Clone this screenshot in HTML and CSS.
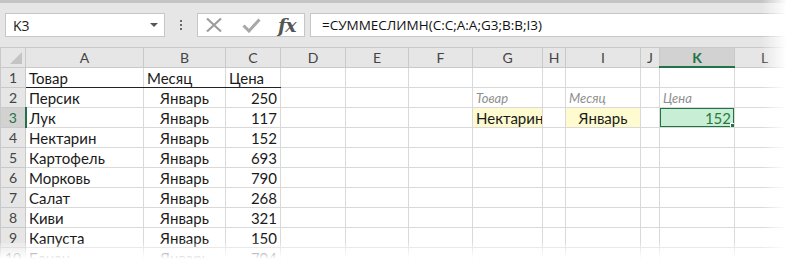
FILE: index.html
```html
<!Doctype html>
<html>
    <head>
        <link rel="stylesheet" href="styles.css">
        <title>
            СУММЕСЛИМН
        </title>
    </head>
    <body>

        <div class="toolbar">
            <div class="name-box">
                <span>K3</span>
                <span class="name-arrow"></span>
            </div>
            <div class="grip">
                <span></span><span></span><span></span>
            </div>
            <div class="formula-buttons">
                <svg class="icon" width="18" height="16" viewBox="0 0 18 16">
                    <path d="M2 1.5 L16 14.5 M16 1.5 L2 14.5" stroke="#9d9d9d" stroke-width="2.2" fill="none"/>
                </svg>
                <svg class="icon" width="19" height="15" viewBox="0 0 19 15">
                    <path d="M1.5 7.5 L7 13 L17.5 1.5" stroke="#a8a8a8" stroke-width="3" fill="none"/>
                </svg>
                <span class="fx">fx</span>
            </div>
            <div class="formula-input">=СУММЕСЛИМН(C:C;A:A;G3;B:B;I3)</div>
        </div>

        <table class="sheet">
            <colgroup>
                <col class="col-rowhdr">
                <col style="width:118px">
                <col style="width:82px">
                <col style="width:55px">
                <col style="width:65px">
                <col style="width:63px">
                <col style="width:64px">
                <col style="width:70px">
                <col style="width:23px">
                <col style="width:75px">
                <col style="width:19px">
                <col style="width:75px">
                <col style="width:60px">
            </colgroup>
            <tr class="col-headers">
                <th class="corner"><span class="corner-mark"></span></th>
                <th>A</th><th>B</th><th>C</th><th>D</th><th>E</th><th>F</th>
                <th>G</th><th>H</th><th>I</th><th>J</th><th class="is-active">K</th><th>L</th>
            </tr>
            <tr>
                <th class="row-hdr">1</th>
                <td class="title-cell">Товар</td><td class="title-cell">Месяц</td><td class="title-cell">Цена</td>
                <td></td><td></td><td></td><td></td><td></td><td></td><td></td><td></td><td></td>
            </tr>
            <tr>
                <th class="row-hdr">2</th>
                <td>Персик</td><td class="center">Январь</td><td class="num">250</td>
                <td></td><td></td><td></td>
                <td class="label">Товар</td><td></td><td class="label">Месяц</td><td></td><td class="label">Цена</td><td></td>
            </tr>
            <tr>
                <th class="row-hdr is-active-row">3</th>
                <td>Лук</td><td class="center">Январь</td><td class="num">117</td>
                <td></td><td></td><td></td>
                <td class="criteria">Нектарин</td><td></td><td class="criteria center">Январь</td><td></td>
                <td class="result num"><div class="selection"><span class="fill-handle"></span></div>152</td><td></td>
            </tr>
            <tr>
                <th class="row-hdr">4</th>
                <td>Нектарин</td><td class="center">Январь</td><td class="num">152</td>
                <td></td><td></td><td></td><td></td><td></td><td></td><td></td><td></td><td></td>
            </tr>
            <tr>
                <th class="row-hdr">5</th>
                <td>Картофель</td><td class="center">Январь</td><td class="num">693</td>
                <td></td><td></td><td></td><td></td><td></td><td></td><td></td><td></td><td></td>
            </tr>
            <tr>
                <th class="row-hdr">6</th>
                <td>Морковь</td><td class="center">Январь</td><td class="num">790</td>
                <td></td><td></td><td></td><td></td><td></td><td></td><td></td><td></td><td></td>
            </tr>
            <tr>
                <th class="row-hdr">7</th>
                <td>Салат</td><td class="center">Январь</td><td class="num">268</td>
                <td></td><td></td><td></td><td></td><td></td><td></td><td></td><td></td><td></td>
            </tr>
            <tr>
                <th class="row-hdr">8</th>
                <td>Киви</td><td class="center">Январь</td><td class="num">321</td>
                <td></td><td></td><td></td><td></td><td></td><td></td><td></td><td></td><td></td>
            </tr>
            <tr>
                <th class="row-hdr">9</th>
                <td>Капуста</td><td class="center">Январь</td><td class="num">150</td>
                <td></td><td></td><td></td><td></td><td></td><td></td><td></td><td></td><td></td>
            </tr>
            <tr>
                <th class="row-hdr">10</th>
                <td>Банан</td><td class="center">Январь</td><td class="num">704</td>
                <td></td><td></td><td></td><td></td><td></td><td></td><td></td><td></td><td></td>
            </tr>
        </table>

        <div class="fade-right"></div>
        <div class="fade-bottom"></div>

    </body>
</html>
```

FILE: styles.css
```css
body {
    margin: 0;
    font-family: Lato, "Noto Sans", sans-serif;
    background-color: white;
    overflow: hidden;
}

.toolbar {
    display: flex;
    align-items: center;
    height: 44px;
    padding-left: 5px;
    background-color: #e6e6e6;
    border-top: 3px solid #c4c4c4;
}

.name-box {
    display: flex;
    align-items: center;
    justify-content: space-between;
    box-sizing: border-box;
    width: 160px;
    height: 24px;
    padding-left: 7px;
    padding-right: 6px;
    background-color: white;
    border: 1px solid #c6c6c6;
    font-family: "Open Sans", sans-serif;
    font-size: 14px;
    color: #222;
}

.name-arrow {
    border-left: 4px solid transparent;
    border-right: 4px solid transparent;
    border-top: 4px solid #555;
}

.grip {
    display: flex;
    flex-direction: column;
    gap: 2px;
    width: 32px;
    align-items: center;
}

.grip span {
    width: 2px;
    height: 2px;
    background-color: #6a6a6a;
}

.formula-buttons {
    display: flex;
    align-items: center;
    box-sizing: border-box;
    width: 108px;
    height: 24px;
    padding-left: 7px;
    gap: 19px;
    background-color: white;
    border: 1px solid #c6c6c6;
}

.fx {
    font-family: "DejaVu Serif", serif;
    font-style: italic;
    font-weight: bold;
    font-size: 19px;
    line-height: 20px;
    color: #555;
    margin-left: -2px;
    letter-spacing: -1px;
}

.formula-input {
    flex: 1;
    box-sizing: border-box;
    height: 24px;
    margin-left: 5px;
    padding-left: 11px;
    background-color: white;
    border: 1px solid #c6c6c6;
    border-right: none;
    font-family: "Open Sans", sans-serif;
    font-size: 13.5px;
    line-height: 22px;
    color: #111;
}

.sheet {
    border-collapse: collapse;
    table-layout: fixed;
    width: 794px;
    font-size: 15px;
    color: #1a1a1a;
}

.col-rowhdr {
    width: 25px;
}

.sheet td {
    height: 19px;
    padding: 0 3px;
    border: 1px solid #d9d9d9;
    white-space: nowrap;
    overflow: hidden;
    vertical-align: bottom;
    line-height: 18px;
}

.col-headers th {
    height: 18px;
    padding: 0;
    background-color: #e6e6e6;
    border: 1px solid #c9c9c9;
    font-weight: normal;
    font-size: 14px;
    color: #444;
}

.col-headers .is-active {
    background-color: #d2d2d2;
    color: #217346;
    font-weight: bold;
    border-bottom: 2px solid #217346;
}

.corner {
    position: relative;
}

.corner-mark {
    position: absolute;
    right: 3px;
    bottom: 3px;
    border-left: 12px solid transparent;
    border-bottom: 12px solid #c4c4c4;
}

.row-hdr {
    padding: 0;
    background-color: #e6e6e6;
    border: 1px solid #c9c9c9;
    font-weight: normal;
    font-size: 14px;
    color: #444;
    text-align: center;
}

.is-active-row {
    background-color: #d2d2d2;
    color: #217346;
    border-right: 2px solid #217346;
}

.title-cell {
    border-bottom: 1px solid #222 !important;
}

.center {
    text-align: center;
}

.num {
    text-align: right;
}

.label {
    font-style: italic;
    color: #8f8f8f;
    font-size: 13px;
}

.criteria {
    background-color: #fdfbcf;
}

.result {
    position: relative;
    background-color: #c8efd5;
    color: #2b7a3b;
}

.selection {
    position: absolute;
    top: -1px;
    left: -1px;
    right: -1px;
    bottom: -1px;
    border: 2px solid #217346;
}

.fill-handle {
    position: absolute;
    right: -5px;
    bottom: -5px;
    width: 6px;
    height: 6px;
    background-color: #217346;
    border: 1px solid white;
}

.fade-right {
    position: fixed;
    top: 0;
    right: 0;
    width: 26px;
    height: 100%;
    background: linear-gradient(to right, rgba(255,255,255,0), white);
}

.fade-bottom {
    position: fixed;
    left: 0;
    bottom: 0;
    width: 100%;
    height: 16px;
    background: linear-gradient(to bottom, rgba(255,255,255,0.2), white);
}
```
